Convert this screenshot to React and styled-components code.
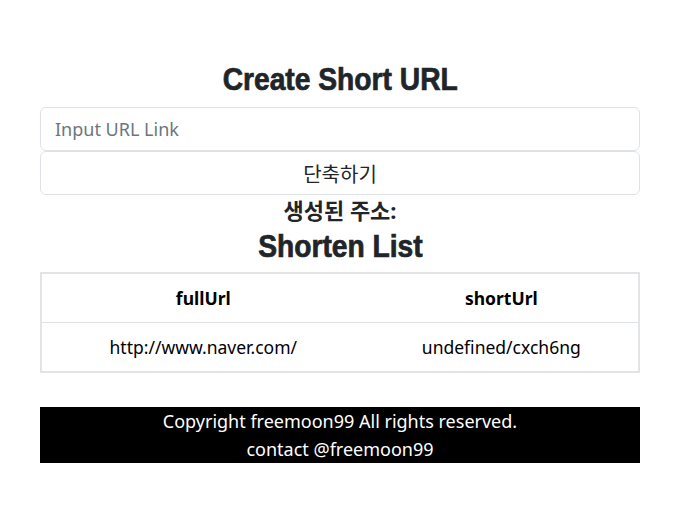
import styled, { createGlobalStyle } from "styled-components"

const GlobalStyle = createGlobalStyle`
    body {
        margin: 0;
        background: #ffffff;
        color: #212529;
        font-family: "Noto Sans", "Noto Sans CJK KR", sans-serif;
    }
`

const rows = [
    { fullUrl: "http://www.naver.com/", shortUrl: "undefined/cxch6ng" },
]

export default function App() {
    return (
        <>
            <GlobalStyle />
            <Page>
                <Title>
                    <span>Create Short URL</span>
                </Title>
                <UrlInput placeholder="Input URL Link" />
                <ShortenButton>단축하기</ShortenButton>
                <Result>생성된 주소:</Result>
                <Title $small>
                    <span>Shorten List</span>
                </Title>
                <Table>
                    <thead>
                        <tr>
                            <HeadCell>fullUrl</HeadCell>
                            <HeadCell>shortUrl</HeadCell>
                        </tr>
                    </thead>
                    <tbody>
                        {rows.map((row) => (
                            <tr key={row.shortUrl}>
                                <Cell>{row.fullUrl}</Cell>
                                <Cell>{row.shortUrl}</Cell>
                            </tr>
                        ))}
                    </tbody>
                </Table>
                <Footer>
                    <p>Copyright freemoon99 All rights reserved.</p>
                    <p>contact @freemoon99</p>
                </Footer>
            </Page>
        </>
    )
}

const Page = styled.div`
    width: 600px;
    margin-left: 40px;
    padding-top: 58px;
    display: flex;
    flex-direction: column;
    align-items: stretch;
`

const Title = styled.h1`
    margin: 0 0 ${(p) => (p.$small ? "3px" : "5px")};
    text-align: center;
    font-family: "Liberation Sans", Arial, sans-serif;
    font-weight: 700;
    font-size: 31px;
    line-height: 44px;
    color: #212529;
    -webkit-text-stroke: 0.7px #212529;
    span {
        display: inline-block;
        transform: scaleX(0.91);
    }
`

const UrlInput = styled.input`
    box-sizing: border-box;
    height: 44px;
    padding: 0 14px;
    border: 1px solid #dee2e6;
    border-radius: 6px;
    font-family: inherit;
    font-size: 18px;
    outline: none;
    &::placeholder {
        color: #6c757d;
    }
`

const ShortenButton = styled.button`
    box-sizing: border-box;
    height: 44px;
    border: 1px solid #dee2e6;
    border-radius: 6px;
    background: #ffffff;
    color: #212529;
    font-family: inherit;
    font-size: 20px;
`

const Result = styled.h3`
    margin: 0;
    text-align: center;
    font-size: 22px;
    font-weight: 700;
    line-height: 30px;
`

const Table = styled.table`
    border-collapse: collapse;
    border: 2px solid #e2e4e8;
    font-size: 17.5px;
    color: #000;
`

const HeadCell = styled.th`
    height: 48px;
    padding: 0;
    border-bottom: 1px solid #dee2e6;
    font-weight: 700;
    text-align: center;
`

const Cell = styled.td`
    height: 48px;
    padding: 0;
    text-align: center;
`

const Footer = styled.footer`
    margin-top: 34px;
    background: #000;
    color: #fff;
    text-align: center;
    font-size: 18px;
    line-height: 28px;
    p {
        margin: 0;
    }
`
